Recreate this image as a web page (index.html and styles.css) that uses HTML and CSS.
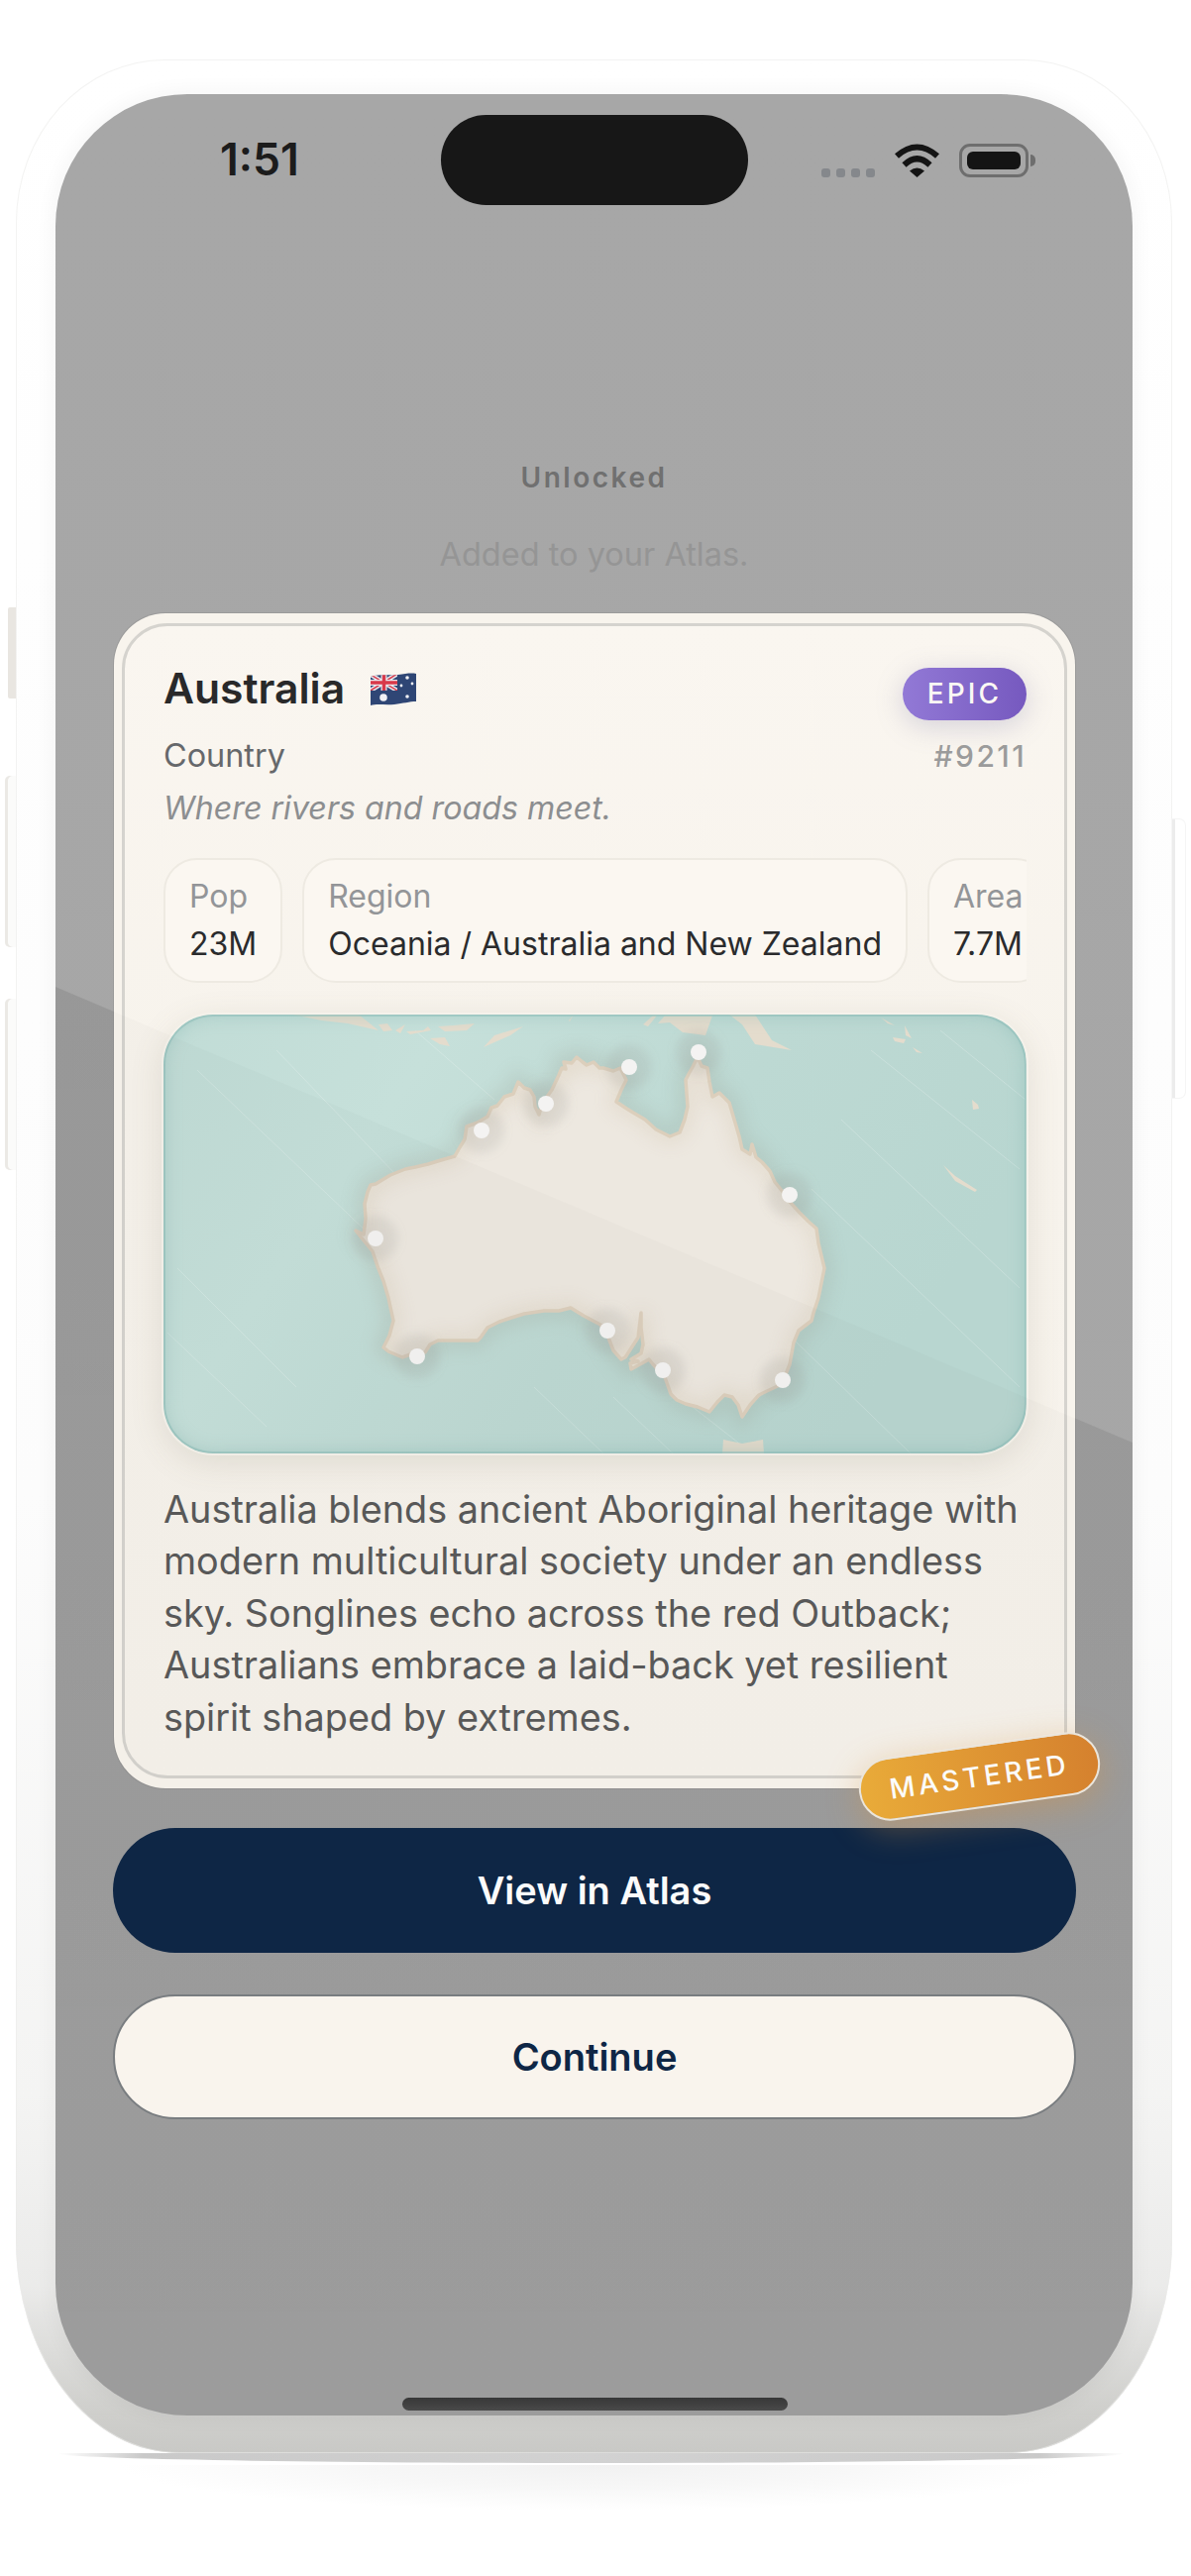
FILE: index.html
```html
<!DOCTYPE html>
<html lang="en">
<head>
<meta charset="utf-8">
<title>Australia unlocked</title>
<link rel="stylesheet" href="styles.css">
</head>
<body>
<main class="stage">
  <div class="phone">
    <span class="side side-a"></span>
    <span class="side side-b"></span>
    <span class="side side-c"></span>
    <span class="side side-r"></span>
    <div class="screen">
      <header class="status">
        <span class="time">1:51</span>
        <span class="island"></span>
        <div class="status-icons">
          <span class="signal"><i></i><i></i><i></i><i></i></span>
          <svg class="wifi" viewBox="0 0 47 34" aria-hidden="true">
            <path d="M3 12.5Q23.5 -5.5 44 12.5" fill="none" stroke="#141414" stroke-width="6"/>
            <path d="M10.5 21.5Q23.5 9 36.500 21.500" fill="none" stroke="#141414" stroke-width="6"/>
            <path d="M16 27.500Q23.500 21.500 31 27.500L23.500 34Z" fill="#141414"/>
          </svg>
          <span class="battery"><span class="battery-fill"></span></span>
          <span class="battery-nub"></span>
        </div>
      </header>

      <section class="intro">
        <h2 class="intro-title">Unlocked</h2>
        <p class="intro-sub">Added to your Atlas.</p>
      </section>

      <section class="content">
        <article class="card">
          <div class="card-inner">
            <div class="head">
              <div class="title-row">
                <h1 class="title">Australia</h1>
                <svg class="flag" viewBox="0 0 46 33" aria-hidden="true">
                  <defs>
                    <clipPath id="flagClip"><path d="M0 4C10 1 20 3 28 2C35 1 41 0 46 1V29C39 29 33 31 24 32C14 33 7 31 0 33Z"/></clipPath>
                    <clipPath id="cantonClip"><rect x="0" y="0" width="27" height="18"/></clipPath>
                  </defs>
                  <g clip-path="url(#flagClip)">
                    <rect width="46" height="33" fill="#2f4675"/>
                    <g clip-path="url(#cantonClip)">
                      <path d="M0 2L27 18M27 1L0 18" stroke="#e9e9ee" stroke-width="4.500"/>
                      <path d="M0 2L27 18M27 1L0 18" stroke="#d8394a" stroke-width="1.500"/>
                      <path d="M13.500 0V18M0 10H27" stroke="#e9e9ee" stroke-width="6"/>
                      <path d="M13.500 0V18M0 10H27" stroke="#d8394a" stroke-width="3.500"/>
                    </g>
                    <circle cx="13" cy="25" r="3.800" fill="#f1f1f5"/>
                    <circle cx="37" cy="5" r="1.800" fill="#f1f1f5"/>
                    <circle cx="31" cy="13" r="1.400" fill="#f1f1f5"/>
                    <circle cx="42" cy="11" r="1.400" fill="#f1f1f5"/>
                    <circle cx="37" cy="24" r="1.800" fill="#f1f1f5"/>
                  </g>
                </svg>
              </div>
              <span class="rarity">EPIC</span>
              <p class="kind">Country</p>
              <p class="serial">#9211</p>
              <p class="tagline">Where rivers and roads meet.</p>
            </div>

            <div class="stats">
              <div class="stat"><span class="stat-label">Pop</span><span class="stat-value">23M</span></div>
              <div class="stat"><span class="stat-label">Region</span><span class="stat-value">Oceania / Australia and New Zealand</span></div>
              <div class="stat"><span class="stat-label">Area</span><span class="stat-value">7.7M</span></div>
            </div>

            <div class="map">
              <svg class="map-svg" viewBox="166 1024 870 443" aria-hidden="true">
                <defs>
                  <linearGradient id="sea" x1="0" y1="0" x2="1" y2="0.350">
                    <stop offset="0" stop-color="#c1dcd6"/>
                    <stop offset="0.300" stop-color="#c6e0da"/>
                    <stop offset="0.650" stop-color="#bdd9d3"/>
                    <stop offset="1" stop-color="#b8d6d0"/>
                  </linearGradient>
                  <filter id="soft" x="-10%" y="-10%" width="120%" height="120%"><feGaussianBlur stdDeviation="9"/></filter>
                  <filter id="halo" x="-50%" y="-50%" width="200%" height="200%"><feGaussianBlur stdDeviation="5"/></filter>
                  <path id="landShape" d="M372 1203L375 1196L380 1195L395 1186L410 1180L420 1178L433 1175L446 1171L460 1167L465 1158L470 1150L472 1137L483 1133L493 1127L497 1118L503 1116L510 1107L519 1104L524 1092L530 1098L536 1100L540 1107L541 1117L545 1125L548 1114L553 1107L558 1100L565 1085L568 1078L572 1079L570 1072L578 1073L583 1067L589 1072L593 1075L600 1072L606 1078L610 1078L620 1081L627 1078L633 1090L628 1100L623 1112L632 1118L640 1123L652 1130L663 1140L677 1147L687 1143L692 1130L695 1117L693 1090L696 1084L700 1077L705 1067L709 1076L715 1078L717 1092L720 1107L727 1103L737 1113L742 1130L747 1147L750 1160L758 1165L760 1155L764 1168L770 1173L778 1182L783 1193L791 1203L798 1213L808 1224L817 1233L825 1240L827 1255L833 1280L830 1295L827 1310L822 1325L820 1333L807 1343L802 1355L798 1377L790 1397L775 1404L767 1408L758 1418L750 1430L746 1418L740 1410L732 1408L725 1415L717 1425L705 1420L693 1417L684 1413L678 1407L672 1390L660 1377L656 1372L638 1382L637 1376L645 1374L638 1372L648 1366L650 1357L648 1340L648 1325L645 1350L632 1370L628 1372L620 1363L615 1350L607 1337L590 1328L577 1320L565 1323L550 1323L530 1326L517 1330L505 1334L493 1340L486 1350L483 1353L465 1353L443 1353L435 1357L430 1365L418 1366L407 1370L393 1364L388 1360L394 1348L398 1333L393 1310L388 1293L382 1278L377 1263L368 1252L360 1242L368 1246L370 1230L369 1215Z"/>
                  <clipPath id="landClip"><use href="#landShape"/></clipPath>
                </defs>
                <rect x="166" y="1024" width="870" height="443" fill="url(#sea)"/>
                <g class="streaks">
                  <path d="M180 1280L300 1400M170 1345L270 1440M200 1080L420 1290M280 1060L520 1310M420 1040L500 1110M540 1400L610 1467"/>
                  <path d="M620 1410L680 1467M700 1420L760 1467M800 1350L920 1467M850 1130L1030 1300M880 1060L1030 1180M820 1200L1030 1400M950 1040L1036 1110"/>
                </g>
                <use href="#landShape" class="glow" filter="url(#soft)"/>
                <use href="#landShape" class="land-fill"/>
                <g clip-path="url(#landClip)"><use href="#landShape" class="land-shade" filter="url(#soft)"/></g>
                <use href="#landShape" class="land-edge"/>
                <g class="isle">
                  <path d="M296 1024H363L383 1040L352 1033L326 1030Z"/>
                  <path d="M383 1034L392 1033L397 1040L388 1041ZM400 1040L410 1034L405 1043ZM411 1041L428 1040L433 1036L436 1040L415 1044ZM443 1036L458 1035L480 1033L472 1040L450 1041ZM435 1048L450 1047L455 1056L445 1054Z"/>
                  <path d="M489 1057L500 1045L529 1036L516 1045L500 1052Z"/>
                  <path d="M575 1030L580 1024L576 1031Z"/>
                  <path d="M650 1034L660 1025L664 1025L655 1036ZM665 1033L672 1025H720L713 1045L690 1042L677 1032Z"/>
                  <path d="M737 1024H763L780 1050L800 1060L763 1054L750 1034Z"/>
                  <path d="M890 1027L904 1035L897 1033ZM914 1035L921 1048L915 1045ZM902 1047L915 1049L913 1053L904 1051ZM922 1057L932 1063L926 1062ZM982 1110L988 1115L989 1119L983 1120Z"/>
                  <path d="M953 1176L965 1187L987 1201L985 1203L965 1192Z"/>
                  <path d="M730 1467L731 1453L750 1457L771 1453L772 1467Z"/>
                </g>
                <g class="halos" filter="url(#halo)">
                  <circle cx="380" cy="1250" r="23"/><circle cx="422" cy="1369" r="23"/><circle cx="487" cy="1141" r="23"/><circle cx="552" cy="1114" r="23"/><circle cx="636" cy="1077" r="23"/><circle cx="706" cy="1062" r="23"/><circle cx="798" cy="1206" r="23"/><circle cx="614" cy="1343" r="23"/><circle cx="670" cy="1383" r="23"/><circle cx="791" cy="1393" r="23"/>
                </g>
                <g class="pins">
                  <circle cx="380" cy="1250" r="8"/><circle cx="422" cy="1369" r="8"/><circle cx="487" cy="1141" r="8"/><circle cx="552" cy="1114" r="8"/><circle cx="636" cy="1077" r="8"/><circle cx="706" cy="1062" r="8"/><circle cx="798" cy="1206" r="8"/><circle cx="614" cy="1343" r="8"/><circle cx="670" cy="1383" r="8"/><circle cx="791" cy="1393" r="8"/>
                </g>
              </svg>
            </div>

            <p class="blurb">Australia blends ancient Aboriginal heritage with modern multicultural society under an endless sky. Songlines echo across the red Outback; Australians embrace a laid-back yet resilient spirit shaped by extremes.</p>
          </div>
          <span class="mastered">MASTERED</span>
        </article>

        <button class="btn btn-primary" type="button">View in Atlas</button>
        <button class="btn btn-secondary" type="button">Continue</button>
      </section>

      <span class="home"></span>
      <span class="glare"></span>
    </div>
  </div>
  <div class="ground"></div>
  <div class="ground-soft"></div>
</main>
</body>
</html>
```

FILE: styles.css
```css
* { box-sizing: border-box; }
html, body { margin: 0; background: #fff; }
body { font-family: Inter, "Liberation Sans", sans-serif; }
h1, h2, p { margin: 0; font-weight: inherit; }

.stage { width: 1202px; height: 2600px; padding-top: 60px; overflow: hidden; }

.phone {
  position: relative;
  margin-left: 16px;
  width: 1167px;
  height: 2416px;
  padding: 35px 40px 38px;
  border-radius: 150px 150px 165px 165px / 165px 165px 215px 215px;
  background: linear-gradient(180deg, #ffffff 0%, #fcfcfc 60%, #f4f4f3 85%, #ebebea 93%, #d0d0cd 98%, #c9c9c6 100%);
  box-shadow: inset 0 0 0 1px rgba(235, 235, 233, .6);
}

.side { position: absolute; background: #fbfbfa; box-shadow: inset 3px 0 0 #ebe9e5; border-radius: 5px 0 0 5px; }
.side-a { left: -8px; top: 553px; width: 8px; height: 92px; background: #e9e6e1; border-radius: 2px 0 0 2px; box-shadow: none; }
.side-b { left: -11px; top: 723px; width: 11px; height: 173px; }
.side-c { left: -11px; top: 948px; width: 11px; height: 173px; }
.side-r { right: -13px; top: 767px; width: 13px; height: 281px; background: #fff; border-radius: 0 6px 6px 0; box-shadow: inset 3px 0 0 #ececec, 0 0 0 1px #f5f5f5; }

.screen {
  position: relative;
  isolation: isolate;
  display: flex;
  flex-direction: column;
  width: 1087px;
  height: 2343px;
  padding-top: 21px;
  overflow: hidden;
  border-radius: 133px;
  background: linear-gradient(180deg, #a7a7a7 0%, #a6a6a6 100%);
  box-shadow: 0 0 18px 5px rgba(0, 0, 0, .035);
}
.screen::before {
  content: "";
  position: absolute;
  inset: 0;
  z-index: -1;
  background: linear-gradient(180deg, rgba(0, 0, 0, .07) 40%, rgba(0, 0, 0, .045) 100%);
  clip-path: polygon(0 901px, 100% 1361px, 100% 100%, 0 100%);
}

.status { display: grid; grid-template-columns: 389px 310px 388px; height: 91px; align-items: center; }
.time { padding-left: 166px; font-size: 44.5px; font-weight: 600; line-height: 91px; color: #1c1c1c; }
.island { height: 91px; border-radius: 46px; background: #171717; }
.status-icons { display: flex; align-items: flex-end; height: 34px; padding-left: 74px; }
.signal { display: flex; gap: 6px; margin-right: 19px; height: 9px; }
.signal i { display: block; width: 9px; height: 9px; border-radius: 3px; background: #85888c; }
.wifi { width: 47px; height: 34px; margin-right: 19px; }
.battery { display: block; width: 70px; height: 34px; padding: 5px; border: 3px solid #6e6e6e; border-radius: 11px; }
.battery-fill { display: block; height: 100%; border-radius: 6px; background: #141414; }
.battery-nub { width: 5px; height: 12px; margin: 0 0 11px 2px; border-radius: 0 6px 6px 0; background: #6e6e6e; }

.intro { margin-top: 257px; text-align: center; }
.intro-title { font-size: 28px; line-height: 36px; font-weight: 600; letter-spacing: .09em; color: #707070; }
.intro-sub { margin-top: 41px; font-size: 32.5px; line-height: 38px; color: #959595; }

.content { display: flex; flex-direction: column; margin-top: 40px; padding: 0 57px 0 58px; }

.card {
  position: relative;
  margin: 0 1px;
  padding: 10px 8px;
  border-radius: 52px;
  background: #f8f4ed;
  box-shadow: 0 0 0 1px rgba(120, 120, 120, .25);
}
.card-inner {
  padding: 42px 38px 33px 39px;
  border: 3px solid #d5d3ce;
  border-radius: 46px;
  background: linear-gradient(180deg, #faf6f0 0%, #f7f3ec 40%, #f6f2eb 100%);
}

.head { display: grid; grid-template-columns: 1fr auto; grid-template-rows: 53px 40px 38px; row-gap: 15px; }
.title-row { display: flex; align-items: flex-start; gap: 26px; }
.title { font-size: 42.6px; line-height: 42px; font-weight: 600; color: #29292a; }
.flag { width: 46px; height: 33px; margin-top: 5px; }
.rarity {
  justify-self: end;
  width: 125px;
  height: 53px;
  border-radius: 27px;
  background: linear-gradient(90deg, #9279d6, #7659bf);
  box-shadow: 0 6px 28px rgba(120, 115, 160, .28);
  color: #fbf8f4;
  font-size: 28px;
  font-weight: 500;
  line-height: 53px;
  letter-spacing: .11em;
  text-align: center;
}
.kind { font-size: 32.4px; line-height: 42px; font-weight: 400; color: #66686b; }
.serial { justify-self: end; font-size: 30px; line-height: 42px; font-weight: 500; letter-spacing: .08em; color: #9b9b9b; }
.tagline { grid-column: 1 / -1; font-size: 32.2px; line-height: 38px; font-style: italic; color: #8c8e90; }

.stats { display: flex; gap: 20px; margin-top: 31px; overflow: hidden; }
.stat {
  flex: none;
  display: flex;
  flex-direction: column;
  height: 126px;
  padding: 13px 24px;
  border: 2px solid #eeeae2;
  border-radius: 34px;
  background: #fbf7f1;
}
.stat-label { font-size: 32px; line-height: 48px; color: #939598; }
.stat-value { font-size: 32px; line-height: 48px; font-weight: 400; color: #2a2b2d; white-space: nowrap; }

.map {
  height: 443px;
  margin-top: 32px;
  position: relative;
  overflow: hidden;
  border-radius: 50px;
  box-shadow: 0 0 0 2px #f5f2eb, 0 8px 34px rgba(120, 110, 90, .16);
}
.map::after {
  content: "";
  position: absolute;
  inset: 0;
  border-radius: 50px;
  box-shadow: inset 0 0 18px rgba(120, 175, 170, .4), inset 0 0 0 2px rgba(150, 195, 190, .6);
}
.map-svg { display: block; width: 870px; height: 443px; }
.streaks path { fill: none; stroke: #fff; stroke-width: 1; opacity: .22; }
.glow { fill: none; stroke: #8f8f80; stroke-width: 16; opacity: .2; }
.land-fill { fill: #ede8e0; }
.land-shade { fill: none; stroke: #d8ccb8; stroke-width: 14; opacity: .45; }
.land-edge { fill: none; stroke: #dccfbc; stroke-width: 3.5; stroke-linejoin: round; }
.isle path { fill: #e4dccd; }
.halos circle { fill: rgba(150, 150, 145, .17); }
.pins circle { fill: #f4f3f2; }

.blurb { margin-top: 30px; font-size: 37.8px; line-height: 52.4px; color: #5a5a5a; }

.mastered {
  position: absolute;
  left: 751px;
  top: 1142px;
  width: 245px;
  height: 64px;
  border: 2px solid #efe9df;
  border-radius: 32px;
  background: linear-gradient(90deg, #edae3a, #d9842f);
  box-shadow: 0 8px 34px rgba(226, 150, 60, .38);
  color: #fff;
  font-size: 28px;
  font-weight: 500;
  line-height: 60px;
  letter-spacing: .13em;
  text-align: center;
  transform: rotate(-8deg);
}

.btn {
  display: block;
  width: 100%;
  height: 126px;
  border-radius: 63px;
  font: 600 38px/1 Inter, "Liberation Sans", sans-serif;
}
.btn-primary { margin-top: 40px; border: 0; background: #0f2747; color: #fff; }
.btn-secondary { margin-top: 42px; border: 2px solid #7b7f83; background: #fdf8f1; color: #0f2747; }

.home { width: 389px; height: 13px; margin: auto 0 5px 350px; border-radius: 7px; background: linear-gradient(180deg, #383838, #4c4c4c); }

.glare {
  position: absolute;
  inset: 0;
  pointer-events: none;
  background: rgba(0, 0, 0, .016);
  clip-path: polygon(0 901px, 100% 1361px, 100% 100%, 0 100%);
}

.ground {
  width: 1077px;
  height: 10px;
  margin-left: 58px;
  border-radius: 0 0 50% 50% / 0 0 100% 100%;
  background: linear-gradient(90deg, rgba(200, 200, 200, 0), #c9c9c9 8%, #d2d2d2 50%, #c9c9c9 92%, rgba(200, 200, 200, 0));
}
.ground-soft {
  width: 960px;
  height: 46px;
  margin: 2px 0 0 120px;
  background: radial-gradient(ellipse 50% 100% at 50% 0, #f1f1f1 0%, #f7f7f7 50%, #fff 100%);
}
```
